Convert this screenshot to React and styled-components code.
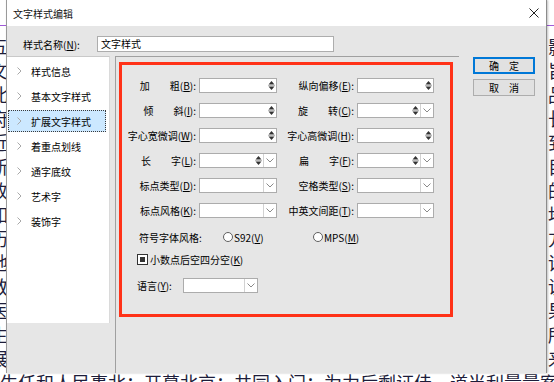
import React from "react";
import styled, { createGlobalStyle } from "styled-components";

const UI_FONT = `"Noto Sans CJK SC", "Noto Sans", sans-serif`;

const GlobalStyle = createGlobalStyle`
  html, body { margin: 0; padding: 0; background: #fff; }
  body { width: 554px; height: 382px; overflow: hidden; }
  #root { width: 554px; height: 382px; }
`;

const Desktop = styled.div`
  width: 554px;
  height: 382px;
  overflow: hidden;
  background: #fff;
  display: grid;
  grid-template-columns: 6px 541px 7px;
  grid-template-rows: 373px 9px;
`;

const DocStrip = styled.div`
  overflow: hidden;
  display: flex;
  flex-direction: column;
  font-family: "Noto Sans CJK SC", serif;
  font-size: 18px;
  line-height: 24px;
  color: #1d1d3a;
  grid-column: ${(p) => p.$col || "auto"};
`;

const DocRule = styled.div`
  flex: none;
  margin-top: 25px;
  height: 1px;
  background: #a05ad8;
`;

const DocLines = styled.div`
  padding-top: ${(p) => p.$pt}px;
  margin-left: ${(p) => p.$ml}px;
  margin-top: ${(p) => p.$mt || 0}px;
`;

const DocLine = styled.div`
  white-space: nowrap;
`;

const Dialog = styled.div`
  position: relative;
  z-index: 1;
  box-sizing: border-box;
  background: #e6e6e6;
  border-left: 1px solid #9a9a9a;
  border-right: 1px solid #8c8c8c;
  box-shadow: 1px 0 2px rgba(0, 0, 0, 0.25);
  display: flex;
  flex-direction: column;
  font-family: ${UI_FONT};
  font-size: 10px;
  color: #000;
`;

const TitleBar = styled.div`
  flex: none;
  height: 26px;
  background: #fff;
  display: flex;
  align-items: center;
  justify-content: space-between;
  padding: 0 7px 0 6px;
`;

const Title = styled.span`
  font-size: 10px;
  color: #111;
`;

const CloseBtn = styled.span`
  display: flex;
  width: 10px;
  height: 10px;
`;

const NameRow = styled.div`
  flex: none;
  display: flex;
  align-items: center;
  height: 16px;
  margin-top: 10px;
  padding-left: 16px;
`;

const NameLabel = styled.span`
  width: 74px;
  white-space: nowrap;
`;

const NameInput = styled.div`
  width: 237px;
  height: 16px;
  box-sizing: border-box;
  background: #fff;
  border: 1px solid #adadad;
  padding-left: 3px;
  line-height: 14px;
`;

const Main = styled.div`
  flex: 1;
  display: flex;
  align-items: flex-start;
  margin-top: 4px;
`;

const NavList = styled.div`
  flex: none;
  width: 103px;
  height: 267px;
  box-sizing: border-box;
  background: #fff;
  border-top: 1px solid #c9c9c9;
  border-right: 1px solid #dadada;
  padding-top: 1px;
  margin-right: 5px;
  display: flex;
  flex-direction: column;
`;

const NavItem = styled.div`
  height: 25px;
  box-sizing: border-box;
  padding: 2px 3px 1px 1px;
`;

const NavInner = styled.div`
  height: 22px;
  box-sizing: border-box;
  display: flex;
  align-items: center;
  padding-left: 8px;
  border: 1px dotted ${(p) => (p.$active ? "#3a3a3a" : "transparent")};
  background: ${(p) => (p.$active ? "#cce8ff" : "transparent")};
`;

const Chevron = styled.svg`
  flex: none;
  width: 5px;
  height: 8px;
  margin-right: 9px;
`;

const Group = styled.div`
  flex: none;
  align-self: stretch;
  width: 344px;
  box-sizing: border-box;
  border-top: 1px solid #a0a0a0;
  border-left: 1px solid #a0a0a0;
  padding: 5px 0 0 3px;
`;

const RedFrame = styled.div`
  width: 334px;
  height: 255px;
  box-sizing: border-box;
  border: 3px solid #ff3218;
  padding-top: 13px;
`;

const FormGrid = styled.div`
  display: grid;
  grid-template-columns: 75px 78px 76px 77px;
  grid-auto-rows: 15px;
  column-gap: 2px;
  row-gap: 10px;
`;

const FieldLabel = styled.span`
  text-align: right;
  line-height: 15px;
  white-space: nowrap;
  padding-right: 1px;
`;

const Field = styled.div`
  display: flex;
  align-items: stretch;
  width: ${(p) => p.$w || "auto"};
  height: 15px;
  box-sizing: border-box;
  background: #fff;
  border: 1px solid #acacac;
`;

const FieldFill = styled.span`
  flex: 1;
`;

const SpinBox = styled.span`
  flex: none;
  width: 8px;
  display: flex;
  align-items: center;
  justify-content: center;
  margin-right: 1px;
`;

const DropBtn = styled.span`
  flex: none;
  width: 13px;
  box-sizing: border-box;
  border-left: 1px solid #d2d2d2;
  display: flex;
  align-items: center;
  justify-content: center;
`;

const Options = styled.div`
  display: flex;
  flex-direction: column;
`;

const OptRow = styled.div`
  display: flex;
  align-items: center;
  height: ${(p) => p.$h}px;
  margin-top: ${(p) => p.$mt}px;
  padding-left: ${(p) => p.$pl}px;
  white-space: nowrap;
`;

const OptLabel = styled.span`
  flex: none;
  width: ${(p) => p.$w}px;
`;

const Radio = styled.span`
  flex: none;
  display: flex;
  align-items: center;
  width: 90px;
`;

const RadioDot = styled.span`
  width: 10px;
  height: 10px;
  box-sizing: border-box;
  border-radius: 50%;
  border: 1px solid #5f5f5f;
  background: #fff;
  margin-right: 1px;
`;

const CheckBox = styled.span`
  flex: none;
  width: 11px;
  height: 11px;
  box-sizing: border-box;
  border: 1px solid #333;
  background: #fff;
  display: flex;
  align-items: center;
  justify-content: center;
  margin-right: 2px;
`;

const CheckMark = styled.span`
  width: 5px;
  height: 5px;
  background: #333;
`;

const ButtonCol = styled.div`
  flex: none;
  display: flex;
  flex-direction: column;
  gap: 5px;
  margin-left: 14px;
  margin-top: 1px;
`;

const Button = styled.div`
  width: 62px;
  height: 17px;
  box-sizing: border-box;
  background: #e1e1e1;
  border: 1px solid ${(p) => (p.$primary ? "#0078d7" : "#adadad")};
  box-shadow: ${(p) => (p.$primary ? "inset 0 0 0 1px #0078d7" : "none")};
  display: flex;
  align-items: center;
  justify-content: center;
  font-size: 10px;
`;

const Key = ({ k }) => (
  <span>
    (<u>{k}</u>)
  </span>
);

const SpinIcon = () => (
  <svg width="7" height="11" viewBox="0 0 7 11">
    <polygon points="3.5,1 6.5,4.5 0.5,4.5" fill="#333" />
    <line x1="0" y1="5.5" x2="7" y2="5.5" stroke="#bbb" strokeWidth="1" />
    <polygon points="0.5,6.5 6.5,6.5 3.5,10" fill="#333" />
  </svg>
);

const DropIcon = () => (
  <svg width="8" height="5" viewBox="0 0 8 5">
    <polyline points="0.5,0.5 4,4 7.5,0.5" fill="none" stroke="#8a8a8a" strokeWidth="1" />
  </svg>
);

const Input = ({ kind, w }) => (
  <Field $w={w}>
    <FieldFill />
    {(kind === "spin" || kind === "spinDrop") && (
      <SpinBox>
        <SpinIcon />
      </SpinBox>
    )}
    {(kind === "drop" || kind === "spinDrop") && (
      <DropBtn>
        <DropIcon />
      </DropBtn>
    )}
  </Field>
);

const navItems = ["样式信息", "基本文字样式", "扩展文字样式", "着重点划线", "通字底纹", "艺术字", "装饰字"];

const rows = [
  [["加　　粗", "B"], "spin", ["纵向偏移", "E"], "spin"],
  [["倾　　斜", "I"], "spin", ["旋　　转", "C"], "spinDrop"],
  [["字心宽微调", "W"], "spin", ["字心高微调", "H"], "spin"],
  [["长　　字", "L"], "spinDrop", ["扁　　字", "F"], "spinDrop"],
  [["标点类型", "D"], "drop", ["空格类型", "S"], "drop"],
  [["标点风格", "K"], "drop", ["中英文间距", "T"], "drop"],
];

const leftChars = ["五", "文", "此", "府", "近", "新", "改", "如", "历", "地", "教", "医", "生", "展"];
const rightChars = ["影", "旨", "品", "长", "到", "目", "的", "地", "方", "诗", "说", "果", "所", "来"];
const bottomLine = "生任和人民事北；开幕北京；共同入门；为力后剩证佳，道当利量量案从态，队良采";

export default function App() {
  return (
    <>
      <GlobalStyle />
      <Desktop>
        <DocStrip>
          <DocRule />
          <DocLines $pt={8} $ml={-10}>
            {leftChars.map((t, i) => (
              <DocLine key={i}>{t}</DocLine>
            ))}
          </DocLines>
        </DocStrip>

        <Dialog>
          <TitleBar>
            <Title>文字样式编辑</Title>
            <CloseBtn>
              <svg width="10" height="10" viewBox="0 0 10 10">
                <line x1="0.5" y1="0.5" x2="9.5" y2="9.5" stroke="#222" strokeWidth="1" />
                <line x1="9.5" y1="0.5" x2="0.5" y2="9.5" stroke="#222" strokeWidth="1" />
              </svg>
            </CloseBtn>
          </TitleBar>

          <NameRow>
            <NameLabel>
              样式名称<Key k="N" />:
            </NameLabel>
            <NameInput>文字样式</NameInput>
          </NameRow>

          <Main>
            <NavList>
              {navItems.map((t, i) => (
                <NavItem key={t}>
                  <NavInner $active={i === 2}>
                    <Chevron viewBox="0 0 5 8">
                      <polyline points="0.5,0.5 4,4 0.5,7.5" fill="none" stroke="#a8a8a8" strokeWidth="1" />
                    </Chevron>
                    {t}
                  </NavInner>
                </NavItem>
              ))}
            </NavList>

            <Group>
              <RedFrame>
                <FormGrid>
                  {rows.map((r, i) => (
                    <React.Fragment key={i}>
                      <FieldLabel>
                        {r[0][0]}
                        <Key k={r[0][1]} />:
                      </FieldLabel>
                      <Input kind={r[1]} />
                      <FieldLabel>
                        {r[2][0]}
                        <Key k={r[2][1]} />:
                      </FieldLabel>
                      <Input kind={r[3]} />
                    </React.Fragment>
                  ))}
                </FormGrid>

                <Options>
                  <OptRow $h={14} $mt={12} $pl={17}>
                    <OptLabel $w={84}>符号字体风格:</OptLabel>
                    <Radio>
                      <RadioDot />
                      S92<Key k="V" />
                    </Radio>
                    <Radio>
                      <RadioDot />
                      MPS<Key k="M" />
                    </Radio>
                  </OptRow>
                  <OptRow $h={12} $mt={9} $pl={15}>
                    <CheckBox>
                      <CheckMark />
                    </CheckBox>
                    小数点后空四分空<Key k="K" />
                  </OptRow>
                  <OptRow $h={15} $mt={13} $pl={15}>
                    <OptLabel $w={46}>
                      语言<Key k="Y" />:
                    </OptLabel>
                    <Input kind="drop" w="75px" />
                  </OptRow>
                </Options>
              </RedFrame>
            </Group>

            <ButtonCol>
              <Button $primary>确　定</Button>
              <Button>取　消</Button>
            </ButtonCol>
          </Main>
        </Dialog>

        <DocStrip>
          <DocRule />
          <DocLines $pt={8} $ml={1}>
            {rightChars.map((t, i) => (
              <DocLine key={i}>{t}</DocLine>
            ))}
          </DocLines>
        </DocStrip>

        <DocStrip $col="1 / -1">
          <DocLines $pt={0} $ml={0} $mt={-3}>
            <DocLine>{bottomLine}</DocLine>
          </DocLines>
        </DocStrip>
      </Desktop>
    </>
  );
}
